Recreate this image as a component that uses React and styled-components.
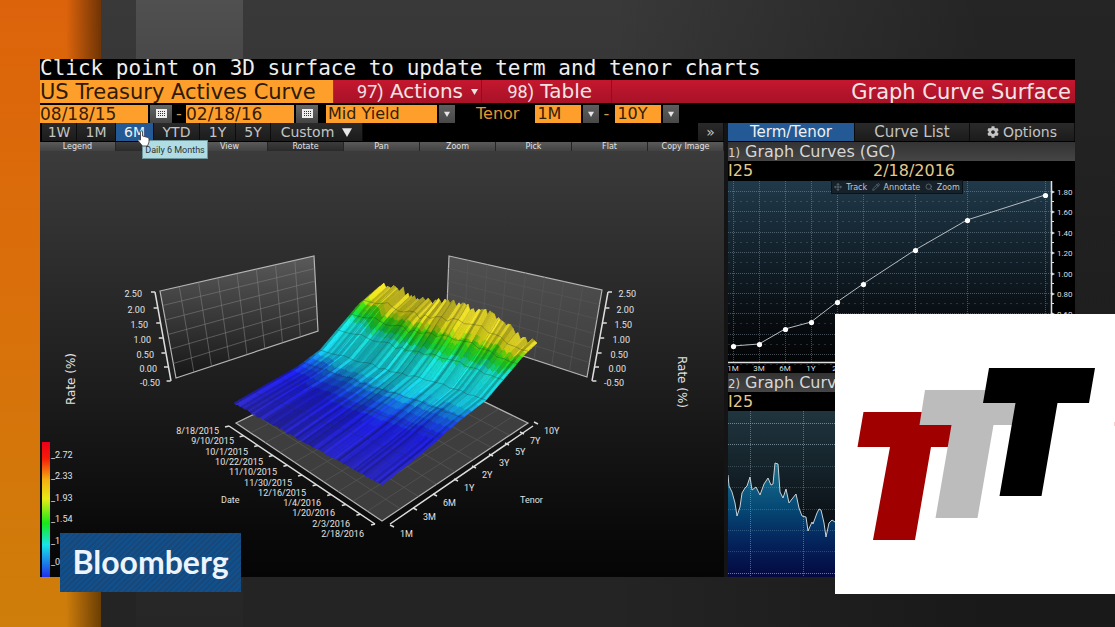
import React, { useState } from 'react';
import styled, { createGlobalStyle } from 'styled-components';
import { FaCog } from 'react-icons/fa';
import { Move, Pencil, Search } from 'lucide-react';

const sans = '"DejaVu Sans", sans-serif';
const narrow = 'Roboto, sans-serif';
const condensed = '"DejaVu Sans Condensed", "Liberation Sans Narrow", "Liberation Sans", sans-serif';

const GlobalStyle = createGlobalStyle`
  *, *::before, *::after {
    box-sizing: border-box;
  }

  body {
    margin: 0;
    background: #242424;
    font-family: ${sans};
  }

  button, input, select {
    border: 0;
    border-radius: 0;
    margin: 0;
    padding: 0;
    font-family: inherit;
  }
`;

const Stage = styled.main`
  position: relative;
  min-height: 100vh;
  overflow: hidden;
  padding: 59px 40px 50px;
  background:
    linear-gradient(90deg, transparent 66px, rgba(40, 20, 0, 0.6) 101px, transparent 101px) 0 0 / 101px 100% no-repeat,
    linear-gradient(180deg, #dd630b, #d9700a 50%, #ce7e0a) 0 0 / 101px 100% no-repeat,
    linear-gradient(180deg, #505050, #484848 10%, #2b2b2b 80%, #262626) 136px 0 / 107px 100% no-repeat,
    linear-gradient(90deg, transparent 55%, rgba(12, 12, 12, 0.45) 88%),
    linear-gradient(180deg, #393939, #353535 20%, #242424 90%);
`;

const Terminal = styled.section`
  background: #000;
`;

const Message = styled.p`
  height: 21px;
  margin: 0;
  color: #eee;
  font: 21px/18px 'DejaVu Sans Mono', monospace;
  white-space: nowrap;
`;

const TitleBar = styled.header`
  display: flex;
  height: 24px;
  background: linear-gradient(180deg, #c4172f, #a81227);
  border-bottom: 1px solid #000;
  color: #f3e4e4;
  font-size: 21px;
  line-height: 23px;
`;

const SecurityName = styled.h1`
  width: 294px;
  margin: 0;
  background: #ff9f2b;
  border-right: 1px solid #7c4b14;
  color: #2d1b06;
  font-size: 21px;
  font-weight: 400;
  line-height: 24px;
  white-space: nowrap;
`;

const MenuButton = styled.button`
  display: flex;
  align-items: center;
  justify-content: flex-end;
  gap: 8px;
  width: ${props => props.$width};
  padding-right: ${props => props.$end};
  background: none;
  border-right: 1px solid #8d1022;
  color: inherit;
  font-size: 20px;
  line-height: 23px;
  white-space: nowrap;
`;

const MenuNumber = styled.span`
  font-family: ${narrow};
  font-size: 18px;
`;

const FunctionName = styled.span`
  margin-left: auto;
  padding-right: 4px;
  line-height: 25px;
`;

const Filters = styled.form`
  display: flex;
  align-items: center;
  height: 19px;
  color: #e8952e;
  font-size: 16px;
`;

const DateField = styled.input`
  width: 108px;
  height: 18px;
  background: #ff9f2b;
  color: #33200a;
  font-size: 17px;
`;

const GreyButton = styled.button`
  display: grid;
  place-items: center;
  width: 22px;
  height: 18px;
  margin-left: 2px;
  background: linear-gradient(180deg, #666, #444);
`;

const Dash = styled.span`
  width: 14px;
  color: #c99a5c;
  text-align: center;
`;

const SelectBox = styled.span`
  display: flex;
  gap: 2px;
  margin-left: ${props => props.$gap || '0'};
`;

const Select = styled.select`
  appearance: none;
  width: ${props => props.$width};
  height: 18px;
  padding-left: 2px;
  background: #ff9f2b;
  color: #33200a;
  font-size: 16px;
  line-height: 18px;
`;

const ArrowBox = styled.span`
  display: grid;
  place-items: center;
  width: 16px;
  height: 18px;
  background: linear-gradient(180deg, #5e5e5e, #484848);
`;

const FilterLabel = styled.label`
  margin-left: 21px;
`;

const Columns = styled.div`
  display: grid;
  grid-template-columns: minmax(0, 1fr) 347px;
  gap: 4px;
  background: #141414;
`;

const Column = styled.section`
  min-width: 0;
`;

const Tabs = styled.nav`
  display: flex;
  height: 19px;
  padding-left: ${props => props.$inset || '0'};
  background: #000;
  border-bottom: 1px solid #000;
`;

const Tab = styled.button`
  position: relative;
  display: flex;
  align-items: center;
  justify-content: center;
  gap: ${props => props.$gap || '4px'};
  flex: ${props => props.$flex};
  background: ${props => (props.$active ? '#235a95' : 'linear-gradient(180deg, #2a2a2a, #1b1b1b)')};
  border-right: 1px solid #0c0c0c;
  color: ${props => (props.$active ? '#f0f0f0' : '#c4c4c4')};
  font-size: 14px;
  line-height: 18px;
  white-space: nowrap;
`;

const PanelTab = styled(Tab)`
  font-size: 15px;
`;

const ExpandButton = styled(Tab)`
  margin-left: auto;
`;

const Tooltip = styled.span`
  position: absolute;
  top: 17px;
  left: 26px;
  z-index: 2;
  width: 66px;
  height: 19px;
  background: #b2dce3;
  border: 1px solid #6f979e;
  color: #24363a;
  font: 9px/18px ${narrow};
  text-align: center;
`;

const Pointer = styled.svg`
  position: absolute;
  top: 7px;
  left: 21px;
  z-index: 3;
`;

const ViewTools = styled.div`
  display: grid;
  grid-template-columns: repeat(9, 1fr);
  height: 9px;
`;

const ViewTool = styled.button`
  height: 9px;
  overflow: hidden;
  background: linear-gradient(180deg, ${props => (props.$dim ? '#3c3c3c, #2a2a2a' : '#5a5a5a, #424242')});
  border-right: 1px solid #252525;
  color: #e2e2e2;
  font-size: 8px;
  line-height: 8px;
`;

const Drawing = styled.svg`
  display: block;
  width: 100%;
  height: auto;
  font-family: ${narrow};
`;

const PanelTitle = styled.h2`
  height: 19px;
  margin: 0;
  background: linear-gradient(180deg, #333, #454545);
  color: #d6d6d6;
  font-size: 16px;
  font-weight: 400;
  line-height: 20px;
`;

const PanelNumber = styled.span`
  margin-right: 5px;
  font-family: ${condensed};
  font-size: 13px;
`;

const PanelInfo = styled.div`
  display: grid;
  grid-template-columns: 145px 1fr;
  height: 19px;
  background: #000;
  color: #e3c98d;
  font-size: 16px;
  line-height: 19px;
`;

const ChartBox = styled.div`
  position: relative;
  background: #000;
`;

const ChartTools = styled.div`
  position: absolute;
  top: 0;
  left: 103px;
  display: flex;
  justify-content: space-around;
  width: 132px;
  height: 14px;
  background: #17212a;
  border: 1px solid #0c1318;
`;

const ChartTool = styled.button`
  display: flex;
  align-items: center;
  gap: 4px;
  background: none;
  color: #c3c8cb;
  font-size: 8px;

  svg {
    color: #71808a;
  }
`;

const Brand = styled.div`
  position: absolute;
  top: 533px;
  left: 60px;
  width: 181px;
  height: 59px;
  background: repeating-linear-gradient(135deg, #11508a 0 2px, #16487c 2px 4px);
  color: #eef4fc;
  font: 700 32px/58px Lato, sans-serif;
  text-align: center;
`;

const Logo = styled.svg`
  position: absolute;
  top: 314px;
  right: 0;
  width: 280px;
  height: 280px;
  background: #fff;
`;

const dates = [
  '8/18/2015', '9/10/2015', '10/1/2015', '10/22/2015', '11/10/2015', '11/30/2015',
  '12/16/2015', '1/4/2016', '1/20/2016', '2/3/2016', '2/18/2016',
];

const tenors = [
  ['1M', 400, 537], ['3M', 423, 520], ['6M', 443, 506], ['1Y', 464, 491], ['2Y', 482, 478],
  ['3Y', 499, 466], ['5Y', 515, 455], ['7Y', 530, 444], ['10Y', 544, 434],
];

const rates = ['2.50', '2.00', '1.50', '1.00', '0.50', '0.00', '-0.50'];
const rateY = [292, 308, 323, 338, 353, 367, 381];

// outline of the surface: first and last date, then the longest tenor
const firstDate = [[234, 403], [260, 388], [297, 367], [320, 350], [343, 323], [358, 305], [380, 286]];
const lastDate = [[382, 485], [425, 451], [455, 424], [486, 400], [509, 373], [525, 354], [537, 343]];
const longEnd = [
  [380, 286], [391, 288], [402, 289], [411, 296], [420, 299], [430, 303], [438, 301], [447, 299],
  [457, 304], [467, 307], [477, 311], [487, 313], [499, 320], [510, 328], [524, 341], [537, 343],
];

const mix = (a, b, t) => a + (b - a) * t;
const noise = n => {
  const x = Math.sin(n * 12.9898) * 43758.5453;
  return x - Math.floor(x);
};

function along(points, t) {
  const pos = Math.min(t, 0.99999) * (points.length - 1);
  const i = Math.floor(pos);
  const [x1, y1] = points[i];
  const [x2, y2] = points[i + 1];
  return [mix(x1, x2, pos - i), mix(y1, y2, pos - i)];
}

const DAYS = 84;
const STEPS = 26;

function surfacePoint(s, t) {
  const a = along(firstDate, s);
  const b = along(lastDate, s);
  const top = along(longEnd, t);
  const pull = s ** 3;
  const day = Math.round(t * DAYS);
  const jitter = (noise(day) - 0.5) * (2 + 6 * s ** 2) * (t > 0 && t < 1 ? 1 : 0);
  return [
    mix(a[0], b[0], t) + (top[0] - mix(380, 537, t)) * pull,
    mix(a[1], b[1], t) + (top[1] - mix(286, 343, t)) * pull + jitter,
  ];
}

const ramp = [
  [0, [46, 42, 190]], [0.3, [30, 30, 228]], [0.42, [20, 105, 225]], [0.5, [22, 200, 228]],
  [0.7, [25, 222, 210]], [0.76, [20, 205, 60]], [0.84, [60, 210, 10]],
  [0.89, [215, 212, 20]], [1, [226, 212, 40]],
];

function surfaceColor(s, t, day) {
  const shift = 0.05 * t + 0.07 * Math.sin(t * Math.PI);
  const v = Math.max(0, Math.min(1, s + shift + (noise(day + 40) - 0.5) * 0.04));
  const k = Math.max(1, ramp.findIndex(([stop]) => stop >= v));
  const [v1, c1] = ramp[k - 1];
  const [v2, c2] = ramp[k];
  const shade = 0.74 + noise(day * 3 + 7) * 0.36;
  const rgb = c1.map((c, n) => Math.min(255, Math.round(mix(c, c2[n], (v - v1) / (v2 - v1)) * shade)));
  return `rgb(${rgb.join(',')})`;
}

const toPath = points => points.map(([x, y], i) => `${i ? 'L' : 'M'}${x.toFixed(1)} ${y.toFixed(1)}`).join('');

const cells = [];
for (let d = 0; d < DAYS; d += 1) {
  for (let k = 0; k < STEPS; k += 1) {
    const t = d / DAYS;
    const s = k / STEPS;
    cells.push({
      key: `${d}-${k}`,
      color: surfaceColor(s + 0.5 / STEPS, t, d),
      path: `${toPath([
        surfacePoint(s, t),
        surfacePoint((k + 1) / STEPS, t),
        surfacePoint((k + 1) / STEPS, (d + 1) / DAYS),
        surfacePoint(s, (d + 1) / DAYS),
      ])}Z`,
    });
  }
}

const range = n => Array.from({ length: n }, (_, i) => i);

const tenorLines = range(7).map(i =>
  toPath(range(29).map(d => surfacePoint((i + 1) / 8, (d * 3) / DAYS)))
);
const dateLines = range(9).map(i =>
  toPath(range(STEPS + 1).map(k => surfacePoint(k / STEPS, (i + 1) / 10)))
);

// grid lines across a four sided wall, corners in clockwise order from top left
function gridPath([tl, tr, br, bl], cols, rows) {
  const at = (u, v) => [
    mix(mix(tl[0], tr[0], u), mix(bl[0], br[0], u), v),
    mix(mix(tl[1], tr[1], u), mix(bl[1], br[1], u), v),
  ];
  const down = range(cols - 1).map(i => toPath([at((i + 1) / cols, 0), at((i + 1) / cols, 1)]));
  const across = range(rows - 1).map(i => toPath([at(0, (i + 1) / rows), at(1, (i + 1) / rows)]));
  return down.concat(across).join('');
}

const walls = [
  { fill: 'url(#wall)', corners: [[160, 291], [314, 256], [318, 331], [176, 378]], cols: 8, rows: 6, line: '#7c7c7c' },
  { fill: 'url(#backWall)', corners: [[449, 256], [602, 290], [587, 377], [446, 331]], cols: 8, rows: 6, line: '#575757' },
  { fill: '#3e3e3e', corners: [[236, 423], [382, 352], [528, 423], [382, 521]], cols: 8, rows: 10, line: '#5a5a5a' },
];

// the two lowest ones run under the brand plate
const legend = ['_2.72', '_2.33', '_1.93', '_1.54', '_1', '_0'];

function SurfaceChart() {
  return (
    <Drawing viewBox="40 151 684 426" role="img" aria-label="Curve surface">
      <defs>
        <linearGradient id="room" x1="0" y1="0" x2="0" y2="1">
          <stop offset="0" stopColor="#3b3b3b" />
          <stop offset="0.5" stopColor="#202020" />
          <stop offset="0.9" stopColor="#090909" />
          <stop offset="1" stopColor="#050505" />
        </linearGradient>
        <linearGradient id="wall" x1="0" y1="0" x2="0" y2="1">
          <stop offset="0" stopColor="#5a5a5a" />
          <stop offset="1" stopColor="#161616" />
        </linearGradient>
        <linearGradient id="backWall" x1="0" y1="0" x2="0" y2="1">
          <stop offset="0" stopColor="#505050" />
          <stop offset="1" stopColor="#3d3d3d" />
        </linearGradient>
        <linearGradient id="heat" x1="0" y1="0" x2="0" y2="1">
          <stop offset="0" stopColor="#f00018" />
          <stop offset="0.12" stopColor="#f51b08" />
          <stop offset="0.28" stopColor="#f5b010" />
          <stop offset="0.42" stopColor="#e8ea15" />
          <stop offset="0.6" stopColor="#18e818" />
          <stop offset="0.76" stopColor="#18e5e8" />
          <stop offset="1" stopColor="#2030e8" />
        </linearGradient>
      </defs>
      <rect x="40" y="151" width="684" height="426" fill="url(#room)" />

      {walls.map(({ fill, corners, cols, rows, line }) => (
        <g key={fill}>
          <path d={`${toPath(corners)}Z`} fill={fill} stroke="#b4b4b4" strokeWidth="1.2" />
          <path d={gridPath(corners, cols, rows)} stroke={line} strokeWidth="0.6" fill="none" />
        </g>
      ))}

      {cells.map(({ key, color, path }) => (
        <path key={key} d={path} fill={color} stroke={color} strokeWidth="0.7" />
      ))}
      <path d={tenorLines.join('')} stroke="#203030" strokeOpacity="0.5" strokeWidth="0.6" fill="none" />
      <path d={dateLines.join('')} stroke="#203030" strokeOpacity="0.4" strokeWidth="0.6" fill="none" />

      <g stroke="#ddd" strokeWidth="1.5" fill="none">
        <path d="M155 292L171 381M608 292L592 381M229 426L375 524M390 524L533 426" />
        {rateY.map((y, i) => (
          <path key={y} d={`M${151 + i * 2.6} ${y}h4M${608 - i * 2.6} ${y}h4`} />
        ))}
        {dates.map((date, i) => (
          <path key={date} d={`M${229 + i * 14.6} ${426 + i * 9.8}l-4 1`} />
        ))}
        {tenors.map(([name, x, y]) => (
          <path key={name} d={`M${x - 10} ${y - 12}l4 2`} />
        ))}
      </g>

      <g fill="#e2e2e2" fontSize="9">
        {rates.map((rate, i) => (
          <React.Fragment key={rate}>
            <text x={142 + i * 3} y={rateY[i] + 5} textAnchor="end">{rate}</text>
            <text x={636 - i * 2} y={rateY[i] + 5} textAnchor="end">{rate}</text>
          </React.Fragment>
        ))}
        {dates.map((date, i) => (
          <text key={date} x={219 + Math.round(i * 14.5)} y={434 + Math.round(i * 10.3)} textAnchor="end">{date}</text>
        ))}
        {tenors.map(([name, x, y]) => (
          <text key={name} x={x} y={y}>{name}</text>
        ))}
        <text x="221" y="503">Date</text>
        <text x="520" y="503">Tenor</text>
        <text transform="translate(75 379) rotate(-90)" textAnchor="middle" fontSize="12" fontFamily={sans}>Rate (%)</text>
        <text transform="translate(678 382) rotate(90)" textAnchor="middle" fontSize="12" fontFamily={sans}>Rate (%)</text>
        <rect x="42" y="442" width="8" height="135" fill="url(#heat)" />
        {legend.map((label, i) => (
          <text key={label} x="51" y={458 + Math.round(i * 21.4)}>{label}</text>
        ))}
      </g>
    </Drawing>
  );
}

const curve = [
  [733, 346], [759, 344], [785, 329], [811, 322], [837, 302],
  [863, 284], [915, 250], [967, 220], [1045, 195],
];
const curveTenors = ['1M', '3M', '6M', '1Y', '2Y', '3Y', '5Y', '7Y', '10Y'];
const curveRates = ['1.80', '1.60', '1.40', '1.20', '1.00', '0.80', '0.60', '0.40'];

function TermChart() {
  return (
    <Drawing viewBox="728 180 347 193" role="img" aria-label="Term chart">
      <defs>
        <linearGradient id="term" x1="0" y1="0" x2="0" y2="1">
          <stop offset="0" stopColor="#20394a" />
          <stop offset="0.35" stopColor="#14242f" />
          <stop offset="0.8" stopColor="#070b0f" />
          <stop offset="1" stopColor="#030405" />
        </linearGradient>
      </defs>
      <rect x="728" y="181" width="323" height="181" fill="url(#term)" />
      <g stroke="#a3b3bd" strokeOpacity="0.4" strokeDasharray="1 1">
        {curve.map(([x]) => <path key={x} d={`M${x + 0.5} 181v181`} />)}
        {range(9).map(i => <path key={i} d={`M728 ${Math.round(191 + i * 20.4) + 0.5}h323`} />)}
      </g>
      <g stroke="#a3b3bd" strokeOpacity="0.22" strokeDasharray="2 4">
        {range(9).map(i => <path key={i} d={`M728 ${Math.round(201 + i * 20.4) + 0.5}h323`} />)}
      </g>
      <path d="M1051.5 181V362.5H728" stroke="#e0e0e0" strokeWidth="1.5" fill="none" />
      <path d={toPath(curve)} stroke="#b6bcc0" fill="none" />
      {curve.map(([x, y]) => <circle key={x} cx={x + 0.5} cy={y + 0.5} r="2.6" fill="#fff" />)}
      <g fill="#dedede" fontSize="8">
        {curveRates.map((rate, i) => {
          const y = Math.round(191 + i * 20.4);
          return (
            <React.Fragment key={rate}>
              <path d={`M1051 ${y - 1}l4 2l-4 2z`} />
              <path d={`M1051 ${y + 10}h3v1h-3z`} />
              <text x="1057" y={y + 4}>{rate}</text>
            </React.Fragment>
          );
        })}
        {curve.map(([x], i) => <text key={x} x={x} y="371" textAnchor="middle">{curveTenors[i]}</text>)}
      </g>
    </Drawing>
  );
}

const history = [
  [728, 475], [729, 486], [732, 492], [735, 503], [737, 516], [740, 507], [742, 493], [745, 488],
  [747, 486], [750, 477], [752, 490], [756, 487], [760, 495], [764, 484], [768, 478], [771, 485],
  [773, 484], [775, 463], [778, 464], [780, 492], [783, 498], [786, 489], [789, 503], [792, 499],
  [796, 494], [799, 508], [802, 516], [806, 517], [808, 531], [812, 522], [813, 524], [817, 513],
  [819, 509], [821, 510], [824, 523], [826, 537], [829, 523], [832, 520], [835, 522], [1051, 530],
];

function TenorChart() {
  return (
    <Drawing viewBox="728 411 347 166" role="img" aria-label="Tenor chart">
      <defs>
        <linearGradient id="back" x1="0" y1="0" x2="0" y2="1">
          <stop offset="0" stopColor="#20353f" />
          <stop offset="0.6" stopColor="#0c1419" />
          <stop offset="1" stopColor="#06090c" />
        </linearGradient>
        <linearGradient id="area" gradientUnits="userSpaceOnUse" x1="0" y1="460" x2="0" y2="577">
          <stop offset="0" stopColor="#1c7490" />
          <stop offset="0.4" stopColor="#064a76" />
          <stop offset="0.7" stopColor="#04245c" />
          <stop offset="1" stopColor="#050840" />
        </linearGradient>
      </defs>
      <rect x="728" y="411" width="323" height="166" fill="url(#back)" />
      <path d={`${toPath(history)}V577H728Z`} fill="url(#area)" />
      <g stroke="#a9c0ce" strokeOpacity="0.45" strokeDasharray="1 1">
        {range(6).map(i => <path key={i} d={`M${750 + i * 53}.5 411v166`} />)}
        {range(8).map(i => (
          <path key={i} d={`M728 ${Math.round(423 + i * 21.4)}.5h323`} strokeOpacity={i % 7 < 2 ? 0.6 : 0.25} />
        ))}
      </g>
      <path d={toPath(history)} stroke="#c6d2d8" fill="none" />
    </Drawing>
  );
}

const Arrow = ({ size = 8 }) => (
  <svg width={size} height={size} viewBox="0 0 8 8" aria-hidden="true">
    <path d="M0 1h8L4 8z" fill="#e6e6e6" />
  </svg>
);

const CalendarIcon = () => (
  <svg width="11" height="9" viewBox="0 0 11 9" aria-hidden="true">
    <path d="M0 0h11v9H0z" fill="#eee" />
    <path d="M2 2h1v1H2zM4 2h1v1H4zM6 2h1v1H6zM8 2h1v1H8zM2 4h1v1H2zM4 4h1v1H4zM6 4h1v1H6zM8 4h1v1H8zM2 6h1v1H2zM4 6h1v1H4zM6 6h1v1H6zM8 6h1v1H8z" fill="#333" />
  </svg>
);

const DropDown = ({ id, label, value, width, gap }) => (
  <SelectBox $gap={gap}>
    <Select id={id} aria-label={label} defaultValue={value} $width={width}>
      <option>{value}</option>
    </Select>
    <ArrowBox><Arrow size={6} /></ArrowBox>
  </SelectBox>
);

const periods = [
  ['1W', '35px'], ['1M', '39px'], ['6M', '38px'], ['YTD', '46px'], ['1Y', '36px'], ['5Y', '35px'],
];
const viewTools = ['Legend', '', 'View', 'Rotate', 'Pan', 'Zoom', 'Pick', 'Flat', 'Copy Image'];

const App = () => {
  const [period, setPeriod] = useState('6M');
  const [panel, setPanel] = useState('Term/Tenor');

  return (
    <Stage>
      <GlobalStyle />
      <Terminal>
        <Message>Click point on 3D surface to update term and tenor charts</Message>
        <TitleBar>
          <SecurityName>US Treasury Actives Curve</SecurityName>
          <MenuButton $width="148px" $end="3px">
            <span><MenuNumber>97)</MenuNumber> Actions</span>
            <Arrow size={7} />
          </MenuButton>
          <MenuButton $width="130px" $end="19px">
            <span><MenuNumber>98)</MenuNumber> Table</span>
          </MenuButton>
          <FunctionName>Graph Curve Surface</FunctionName>
        </TitleBar>
        <Filters onSubmit={event => event.preventDefault()}>
          <DateField aria-label="From" defaultValue="08/18/15" />
          <GreyButton type="button" aria-label="Pick start date"><CalendarIcon /></GreyButton>
          <Dash>-</Dash>
          <DateField aria-label="To" defaultValue="02/18/16" />
          <GreyButton type="button" aria-label="Pick end date"><CalendarIcon /></GreyButton>
          <DropDown label="Yield" value="Mid Yield" width="111px" gap="8px" />
          <FilterLabel htmlFor="tenor-from">Tenor</FilterLabel>
          <DropDown id="tenor-from" value="1M" width="46px" gap="16px" />
          <Dash>-</Dash>
          <DropDown label="Tenor to" value="10Y" width="46px" gap="2px" />
        </Filters>

        <Columns>
          <Column>
            <Tabs $inset="2px">
              {periods.map(([name, width]) => (
                <Tab key={name} $flex={`0 0 ${width}`} $active={name === period} onClick={() => setPeriod(name)}>
                  {name}
                  {name === '6M' && (
                    <>
                      <Tooltip role="tooltip">Daily 6 Months</Tooltip>
                      <Pointer width="13" height="17" viewBox="0 0 13 17" aria-hidden="true">
                        <path
                          d="M3.5 1.5q1-1 2 0V6l5.5 1.5q1 .5 1 1.5v3l-1.5 4h-5L1 10.5q0-1.500 2.500-.5z"
                          fill="#fff"
                          stroke="#333"
                          strokeWidth="0.8"
                        />
                      </Pointer>
                    </>
                  )}
                </Tab>
              ))}
              <Tab $flex="0 0 92px" $gap="8px">Custom <Arrow size={10} /></Tab>
              <ExpandButton $flex="0 0 26px" aria-label="Expand">»</ExpandButton>
            </Tabs>
            <ViewTools>
              {viewTools.map((name, i) => (
                <ViewTool key={name} $dim={i === 1 || i === 3} aria-label={name || 'More'}>{name}</ViewTool>
              ))}
            </ViewTools>
            <SurfaceChart />
          </Column>

          <Column>
            <Tabs>
              <PanelTab $flex="127" $active={panel === 'Term/Tenor'} onClick={() => setPanel('Term/Tenor')}>
                Term/Tenor
              </PanelTab>
              <PanelTab $flex="115" $active={panel === 'Curve List'} onClick={() => setPanel('Curve List')}>
                Curve List
              </PanelTab>
              <Tab $flex="105"><FaCog size={12} /> Options</Tab>
            </Tabs>
            <PanelTitle><PanelNumber>1)</PanelNumber>Graph Curves (GC)</PanelTitle>
            <PanelInfo><span>I25</span><span>2/18/2016</span></PanelInfo>
            <ChartBox>
              <TermChart />
              <ChartTools>
                <ChartTool><Move size={8} />Track</ChartTool>
                <ChartTool><Pencil size={8} />Annotate</ChartTool>
                <ChartTool><Search size={8} />Zoom</ChartTool>
              </ChartTools>
            </ChartBox>
            <PanelTitle><PanelNumber>2)</PanelNumber>Graph Curves</PanelTitle>
            <PanelInfo><span>I25</span></PanelInfo>
            <ChartBox>
              <TenorChart />
            </ChartBox>
          </Column>
        </Columns>
      </Terminal>

      <Brand>Bloomberg</Brand>
      <Logo viewBox="835 314 280 280" role="img" aria-label="TTT">
        <path d="M863.500 412h106l-6 35H931l-16 93h-42l17-93h-32.500z" fill="#a00000" />
        <path d="M925 390h106l-6 35h-31.500l-16 93h-42l16-93h-32z" fill="#bcbcbc" />
        <path d="M989 368h106l-6 35h-31.500l-16 93h-42l16-93h-32.500z" fill="#000" />
        <path d="M1114 422h1v4h-1z" fill="#f6d4d4" />
      </Logo>
    </Stage>
  );
};

export default App;
